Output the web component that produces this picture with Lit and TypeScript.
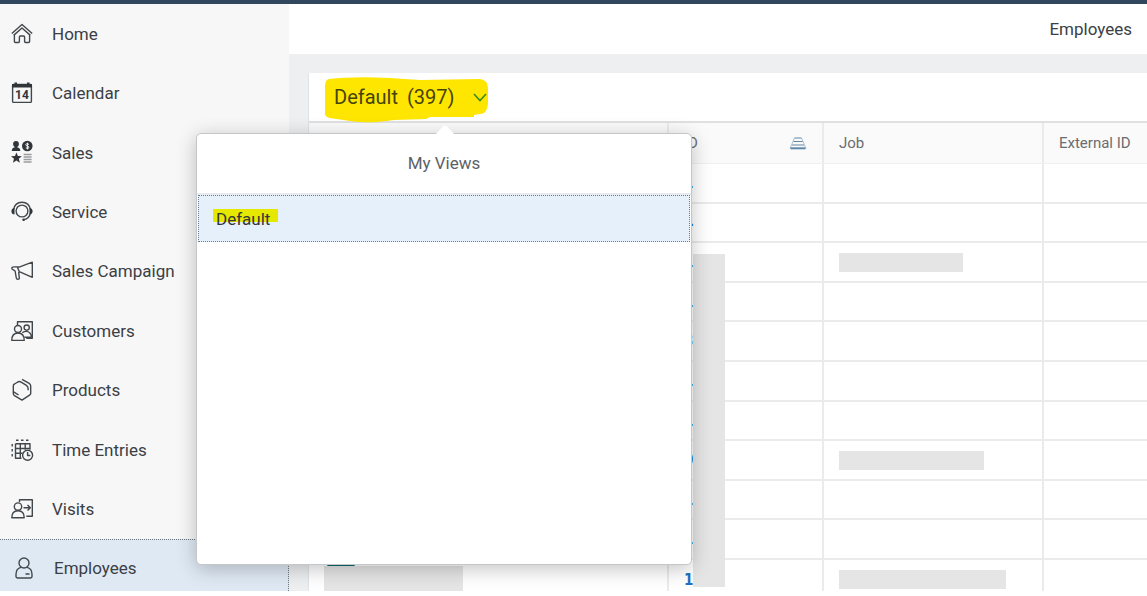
import { LitElement, html, css, svg, nothing } from "lit";
import { customElement, property } from "lit/decorators.js";
import { classMap } from "lit/directives/class-map.js";

const icons: Record<string, unknown> = {
  home: svg`<path d="M.8 10.6 11 1.6l10.2 9M2.6 12.4 11 5l8.4 7.4M3.4 12v6.4q0 1.1 1.1 1.1h2.9q1 0 1-1v-4.6q0-.9.9-.9h3.4q.9 0 .9.9v4.6q0 1 1 1h2.9q1.1 0 1.1-1.1V12"/>`,
  calendar: svg`<rect x="1.6" y="2.4" width="18.8" height="18" rx="1"/>
    <path class="solid" d="M1 2h2.500V.4H6V2h10V.4h2.500V2H21v3.500H1z"/>
    <text x="11" y="17" text-anchor="middle">14</text>`,
  sales: svg`<g class="solid"><circle cx="5" cy="2" r="2.9"/><path d="M3.6 3h2.8v2.4q2.9.3 2.9 3.5H.8q0-3.2 2.8-3.5z"/>
    <circle cx="16.3" cy="4" r="5.3"/><path d="m5.4 10.4 1.5 3.7 4 .2-3.1 2.5 1.1 4-3.5-2.2-3.5 2.2 1.1-4L0 14.3l4-.2z"/></g>
    <path class="light" d="M18 2.3q-3.200-1.300-3.200.3 0 1.100 1.600 1.500 1.700.4 1.600 1.500-.2 1.500-3.200.3M16.400.7v6.800"/>
    <path class="pale" d="M12.600 12.500h8M12.600 15h8M12.600 17.500h8M12.600 20h8"/>`,
  service: svg`<circle cx="11" cy="10" r="5.900"/><path d="M2.600 8.600C3.400 4.200 6.600 1.300 11 1.300s7.600 2.900 8.400 7.300M19.500 12q-1.400 5.700-6.500 6.600"/>
    <path class="solid" d="M3.500 7v6.500Q.4 13.300.4 10.300T3.500 7zM18.500 7v6.500q3.100-.2 3.100-3.200T18.500 7z"/><circle class="solid" cx="12.600" cy="18.800" r="1.300"/>`,
  campaign: svg`<path d="M21.300 2.200v15.100L10 12.300l-1.600-.4-2-4.600 3-.6zM8.600 6.900H3Q.8 6.900.8 8.300q0 .9 1.500 1.500L4.100 11l1.200 7q.2 1.300 1.500 1.300 1.600 0 1.500-1.300L7.700 12"/>`,
  customers: svg`<path d="M6.500 5.500V1.700h14.800v16.600h-6"/><circle cx="7" cy="9" r="3.500"/>
    <path d="M.8 20.400q0-7.400 6.200-7.400t6.200 7.400z"/><circle cx="15.700" cy="7.600" r="2.600"/><path d="M11.300 12.600q4.400-2.600 7.600.3 1.600 1.700 1.600 4.400h-7"/>`,
  products: svg`<path d="m11 .4 6.800 3.700q1.900 1.100 1.900 3v7.300q0 1-1.200 1.700L11 21.100l-7.500-4.500q-1.200-.7-1.200-1.800V7q0-1.400 1.200-2L6.900 3"/>
    <path d="M6.500 3.200q1.800-1.200 3.600-.1l5 3q2 1.300 2 3.200v2M2.600 12.800l5 3.200"/>`,
  time: svg`<path d="M4.500 4.700H19v6M4.500 4.700v14.500h6M4.500 9.500H19M4.500 14.300h7M9.300 4.700v14.500M14.200 4.700v6M5 1.300h2.500M10 1.300h2.500M15 1.300h2.500M1.200 5v2.500M1.200 10v2.500M1.200 15v2.500"/>
    <circle class="paper" cx="16.600" cy="16.200" r="5"/><path d="M16.600 13v3.500h2.700"/>`,
  visits: svg`<path d="M8.500 4V1.700h12.800v16.600h-6M12.500 9.800H19M16.500 7l2.800 2.800-2.800 2.800"/><circle cx="7" cy="8.600" r="3.700"/>
    <path d="M.8 19.800q0-7 6.200-7t6.200 7z"/>`,
  employee: svg`<circle cx="11" cy="6" r="5"/><path d="M8 10.400q-5 1-5 7v2.200q0 1.400 1.400 1.400h13.200q1.400 0 1.400-1.400v-2.200q0-6-5-7M12.500 17h4"/>`,
};

const navigation = [
  ["Home", "home"],
  ["Calendar", "calendar"],
  ["Sales", "sales"],
  ["Service", "service"],
  ["Sales Campaign", "campaign"],
  ["Customers", "customers"],
  ["Products", "products"],
  ["Time Entries", "time"],
  ["Visits", "visits"],
  ["Employees", "employee"],
];

const employees: { id: string; job?: string }[] = [
  { id: "1" },
  { id: "4" },
  { id: "1", job: "short" },
  { id: "1" },
  { id: "3" },
  { id: "1" },
  { id: "1" },
  { id: "0", job: "medium" },
  { id: "1" },
  { id: "1" },
  { id: "1", job: "long" },
];

@customElement("side-navigation")
class SideNavigation extends LitElement {
  @property() current = "";

  static styles = css`
    :host {
      display: block;
      background: #f7f7f7;
    }
    .list {
      display: flex;
      flex-direction: column;
      height: 100%;
    }
    .item {
      flex: 1 1 0;
      display: flex;
      align-items: center;
      gap: 19px;
      padding-left: 11px;
      color: #3b4045;
      font-size: 17px;
      line-height: 20px;
      text-decoration: none;
    }
    .item.active {
      flex: 0 0 52px;
      padding: 6px 0 0 13px;
      box-sizing: border-box;
      background: #dfe9f4;
      border-top: 1px dotted #6d7780;
      border-right: 1px dotted #6d7780;
    }
    .icon {
      width: 22px;
      height: 22px;
      overflow: visible;
      fill: none;
      stroke: #42474c;
      stroke-width: 1.4;
      stroke-linejoin: round;
    }
    .icon .solid {
      fill: #30353a;
      stroke: none;
    }
    .icon .light {
      stroke: #f7f7f7;
      stroke-width: 1;
    }
    .icon .pale {
      stroke: #9a9d9f;
    }
    .icon .paper {
      fill: #f7f7f7;
    }
    .icon text {
      fill: #30353a;
      stroke: none;
      font-size: 12px;
      font-weight: 700;
    }
  `;

  render() {
    return html`<nav class="list" aria-label="Main">
      ${navigation.map(
        ([label, icon]) => html`<a
          href="#"
          class=${classMap({ item: true, active: label === this.current })}
          aria-current=${label === this.current ? "page" : nothing}
          ><svg class="icon" viewBox="0 0 22 22" aria-hidden="true">${icons[icon]}</svg><span>${label}</span></a
        >`
      )}
    </nav>`;
  }
}

@customElement("employee-table")
class EmployeeTable extends LitElement {
  static styles = css`
    :host {
      display: block;
      position: relative;
    }
    .table {
      width: 100%;
      table-layout: fixed;
      border-collapse: separate;
      border-spacing: 0;
      background: #fff;
    }
    .name {
      width: 360px;
    }
    .id {
      width: 155px;
    }
    .job {
      width: 220px;
    }
    th,
    td {
      box-sizing: border-box;
      height: 40px;
      padding: 0 15px;
      text-align: left;
      border-right: 2px solid #ebebeb;
      border-bottom: 2px solid #ebebeb;
    }
    th:last-child,
    td:last-child {
      border-right: 0;
    }
    tbody tr:nth-child(5n + 2) td,
    tbody tr:nth-child(5n + 4) td {
      height: 39px;
    }
    tbody tr:last-child td {
      height: 31px;
      padding-top: 8px;
      border-bottom: 0;
    }
    tbody tr:last-child td:first-child {
      padding-top: 0;
    }
    th {
      height: 41px;
      color: #6a6d70;
      font-size: 15px;
      font-weight: 400;
      background: #fafafa;
      border-bottom: 1px solid #f0f0f0;
    }
    .sortable {
      display: flex;
      align-items: center;
      justify-content: space-between;
    }
    .sort {
      width: 18px;
      height: 14px;
      fill: none;
      stroke: #5f86a8;
    }
    .link {
      display: block;
      color: #1f70c1;
      font: 700 15px/20px "DejaVu Sans Condensed", "DejaVu Sans", sans-serif;
      text-decoration: none;
    }
    .bar {
      display: block;
      height: 19px;
      background: #e5e5e5;
    }
    .bar.short {
      width: 124px;
    }
    .bar.medium {
      width: 145px;
    }
    .bar.long {
      width: 167px;
    }
    .avatar {
      display: block;
      width: 28px;
      height: 24px;
      margin-left: 3px;
      border-radius: 3px;
      background: #0b6a70;
    }
    .cover {
      position: absolute;
      background: #e5e5e5;
    }
    .cover.ids {
      left: 384px;
      top: 131px;
      bottom: 4px;
      width: 32px;
    }
    .cover.names {
      left: 15px;
      bottom: -2px;
      width: 139px;
      height: 27px;
    }
  `;

  render() {
    return html`<table class="table">
        <colgroup>
          <col class="name" />
          <col class="id" />
          <col class="job" />
          <col />
        </colgroup>
        <thead>
          <tr>
            <th></th>
            <th>
              <span class="sortable"
                >ID<svg class="sort" viewBox="0 0 18 14" aria-label="Sorted ascending">
                  <path d="M5.500 2h7M4.500 5.500h9M3 9h12" />
                  <path d="M1.500 12.300h15" stroke-width="2" />
                  <path d="M5.500 2 1 12.500M12.500 2 17 12.500" stroke-opacity=".5" />
                </svg>
              </span>
            </th>
            <th>Job</th>
            <th>External ID</th>
          </tr>
        </thead>
        <tbody>
          ${employees.map(
            (row, i) => html`<tr>
              <td>${i === employees.length - 1 ? html`<span class="avatar"></span>` : nothing}</td>
              <td><a class="link" href="#">${row.id}</a></td>
              <td>${row.job ? html`<span class="bar ${row.job}"></span>` : nothing}</td>
              <td></td>
            </tr>`
          )}
        </tbody>
      </table>
      <div class="cover ids"></div>
      <div class="cover names"></div>`;
  }
}

@customElement("views-popover")
class ViewsPopover extends LitElement {
  static styles = css`
    :host {
      display: flex;
      flex-direction: column;
      box-sizing: border-box;
      background: #fff;
      border: 1px solid #c4c7c9;
      border-radius: 5px;
      box-shadow: 0 4px 20px rgba(0, 0, 0, 0.24);
    }
    .arrow {
      position: absolute;
      left: 50%;
      top: -9px;
      width: 20px;
      height: 10px;
      margin-left: -9px;
      fill: #fff;
    }
    .title {
      margin: 0;
      padding: 19px 0 20px;
      border-bottom: 2px solid #e8ecee;
      color: #5d6166;
      font-size: 17px;
      font-weight: 400;
      line-height: 20px;
      text-align: center;
    }
    .view {
      display: block;
      height: 47px;
      margin: 0 1px;
      padding: 0 16px;
      border: 1px dotted #6d7d8c;
      background: #e5f0fa;
      color: #32363a;
      font: inherit;
      font-size: 17px;
      line-height: 20px;
      text-align: left;
    }
    .marked {
      display: inline-block;
      margin-left: -2px;
      padding: 0 8px 0 3px;
      background: linear-gradient(#e6e800, #e6e800) 0 0 / 100% 13px no-repeat;
    }
  `;

  render() {
    return html`<svg class="arrow" viewBox="0 0 20 10" aria-hidden="true"><path d="M0 10 8 1.500Q10-.3 12 1.500L20 10z" /></svg>
      <h2 class="title">My Views</h2>
      <button class="view"><span class="marked">Default</span></button>`;
  }
}

@customElement("app-root")
class AppRoot extends LitElement {
  static styles = css`
    :host {
      display: block;
      position: relative;
      font-family: Roboto, "Noto Sans", sans-serif;
      background: #fff;
    }
    .shell {
      display: grid;
      grid-template-columns: 289px minmax(0, 1fr);
      border-top: 4px solid #30475e;
    }
    .main {
      background: #edeff0;
    }
    .header {
      display: flex;
      align-items: center;
      justify-content: flex-end;
      height: 50px;
      padding-right: 15px;
      background: #fff;
    }
    .heading {
      margin: 0;
      color: #3b4045;
      font-size: 17px;
      font-weight: 400;
      line-height: 20px;
    }
    .card {
      margin: 19px 0 0 19px;
      border-left: 1px solid #e0e2e3;
      background: #fff;
    }
    .toolbar {
      display: flex;
      align-items: center;
      height: 48px;
      padding-left: 15px;
      border-bottom: 2px solid #dfe0e1;
    }
    .picker {
      position: relative;
      display: flex;
      align-items: center;
      gap: 9px;
      padding: 0 0 0 10px;
      border: 0;
      background: none;
      color: #47430c;
      font: inherit;
      font-size: 20px;
      line-height: 24px;
      isolation: isolate;
    }
    .chevron {
      width: 14px;
      height: 9px;
      margin-left: 9px;
      fill: none;
      stroke: #3d8a1c;
      stroke-width: 1.6;
    }
    .marker {
      position: absolute;
      left: 0;
      top: -8px;
      z-index: -1;
      width: 165px;
      height: 46px;
      fill: #ffe600;
    }
    .popover {
      position: absolute;
      left: 196px;
      top: 133px;
      width: 496px;
      height: 432px;
    }
  `;

  render() {
    return html`<div class="shell">
        <side-navigation current="Employees"></side-navigation>
        <main class="main">
          <header class="header"><h1 class="heading">Employees</h1></header>
          <section class="card">
            <div class="toolbar">
              <button class="picker" aria-expanded="true">
                <svg class="marker" viewBox="0 0 165 46" aria-hidden="true">
                  <path
                    d="M5 2Q30-1 66 1l30 2 60-1q8 1 8 9v16q-1 10-8 10l-6 1v2h-44l-4 2-32 1q-26 4-44 1L6 41q-6-1-5-6V9Q1 3 5 2z"
                  />
                </svg>
                <span>Default</span><span>(397)</span>
                <svg class="chevron" viewBox="0 0 14 9" aria-hidden="true"><path d="m1 1 6 6.500L13 1" /></svg>
              </button>
            </div>
            <employee-table></employee-table>
          </section>
        </main>
      </div>
      <views-popover class="popover" role="dialog" aria-label="My Views"></views-popover>`;
  }
}
